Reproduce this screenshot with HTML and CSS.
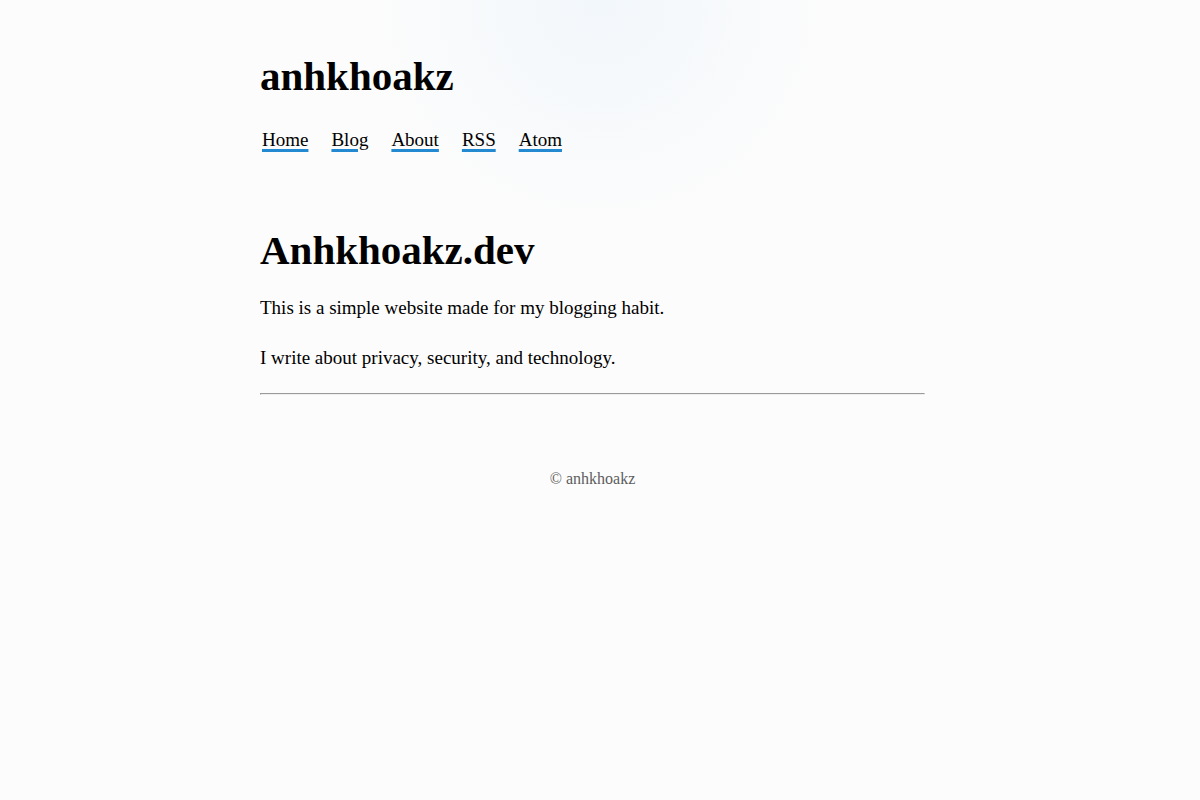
FILE: index.html
```html
<!DOCTYPE html>
<html lang="en">
<head>
<meta charset="utf-8">
<meta name="viewport" content="width=device-width, initial-scale=1">
<title>anhkhoakz</title>
<link rel="stylesheet" href="styles.css">
</head>
<body>
<div class="page">
<header class="site-header">
<h1 class="site-title">anhkhoakz</h1>
<nav class="site-nav">
<a class="nav-link" href="#home">Home</a>
<a class="nav-link" href="#blog">Blog</a>
<a class="nav-link" href="#about">About</a>
<a class="nav-link" href="#rss">RSS</a>
<a class="nav-link" href="#atom">Atom</a>
</nav>
</header>
<main class="content">
<h1 class="page-title">Anhkhoakz.dev</h1>
<p class="text">This is a simple website made for my blogging habit.</p>
<p class="text">I write about privacy, security, and technology.</p>
<hr class="rule">
</main>
<footer class="site-footer">© anhkhoakz</footer>
</div>
</body>
</html>
```
FILE: styles.css
```css
* {
  box-sizing: border-box;
}

body {
  margin: 0;
  min-height: 100vh;
  color: #000;
  background: radial-gradient(circle at 50% 0, #f2f7fb 0, #fcfcfc 240px) #fcfcfc;
  font-family: "Liberation Serif", "Times New Roman", serif;
  font-size: 19px;
  line-height: 30px;
}

.page {
  max-width: 704px;
  margin: 0 auto;
  padding: 51px 27px 20px 12px;
}

.site-title,
.page-title {
  margin: 0;
  font-size: 41px;
  line-height: 50px;
}

.site-nav {
  display: flex;
  flex-wrap: wrap;
  gap: 23px;
  margin-top: 24px;
  padding: 0 2px;
}

.nav-link {
  color: #000;
  text-decoration: underline #2389d0 3px;
  text-underline-offset: 3px;
}

.content {
  margin-top: 70px;
}

.page-title {
  margin-bottom: 18px;
}

.text {
  margin: 0 0 20px;
}

.rule {
  margin: 0;
}

.site-footer {
  margin-top: 69px;
  color: #5c5c5c;
  font-size: 16px;
  text-align: center;
}
```
